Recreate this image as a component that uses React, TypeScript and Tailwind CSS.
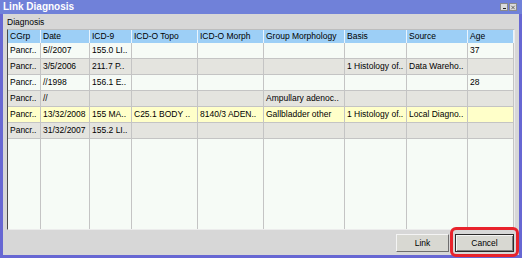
import { X } from "lucide-react";

const cols = "grid grid-cols-[33px_49px_42px_66px_66px_81px_62px_61px_46px]";

const headers = [
  "CGrp",
  "Date",
  "ICD-9",
  "ICD-O Topo",
  "ICD-O Morph",
  "Group Morphology",
  "Basis",
  "Source",
  "Age",
];

type Row = { cells: string[]; tone: "light" | "gray" | "sel" };

const rows: Row[] = [
  { cells: ["Pancr..", "5//2007", "155.0 LI..", "", "", "", "", "", "37"], tone: "light" },
  {
    cells: ["Pancr..", "3/5/2006", "211.7 P..", "", "", "", "1 Histology of..", "Data Wareho..", ""],
    tone: "gray",
  },
  { cells: ["Pancr..", "//1998", "156.1 E..", "", "", "", "", "", "28"], tone: "light" },
  { cells: ["Pancr..", "//", "", "", "", "Ampullary adenoc..", "", "", ""], tone: "gray" },
  {
    cells: [
      "Pancr..",
      "13/32/2008",
      "155 MA..",
      "C25.1 BODY ..",
      "8140/3 ADEN..",
      "Gallbladder other",
      "1 Histology of..",
      "Local Diagno..",
      "",
    ],
    tone: "sel",
  },
  { cells: ["Pancr..", "31/32/2007", "155.2 LI..", "", "", "", "", "", ""], tone: "gray" },
];

const toneBg = {
  light: "bg-[#f6fbf6]",
  gray: "bg-[#e4e4df]",
  sel: "bg-[#ffffc9]",
};

export default function App() {
  return (
    <div
      className="relative flex h-[258px] w-[522px] flex-col bg-[#6767d3] text-[8.5px] text-black"
      style={{ fontFamily: '"Liberation Sans", Arial, sans-serif' }}
    >
      {/* title bar */}
      <div className="flex h-[14px] items-center justify-between bg-[#7081d9] pl-[3px] pr-[5px]">
        <span className="text-[10px] font-bold leading-none text-white">Link Diagnosis</span>
        <div className="flex gap-[1px]">
          <div className="flex h-[8px] w-[8px] items-end justify-center border border-[#8a8a8a] bg-[#dcdcdc] pb-[1px]">
            <div className="h-[1px] w-[3px] bg-[#222]" />
          </div>
          <div className="flex h-[8px] w-[8px] items-center justify-center border border-[#8a8a8a] bg-[#dcdcdc]">
            <X size={7} strokeWidth={2.5} className="text-[#222]" />
          </div>
        </div>
      </div>

      {/* body */}
      <div className="mx-[3px] mb-[3px] flex flex-1 flex-col bg-[#d7d7d7] px-[4px]">
        <div className="flex h-[15px] items-center pt-[2px] leading-none">Diagnosis</div>

        <div className="flex h-[201px] w-[508px] flex-col border-b border-l border-r border-t border-b-[#ececec] border-l-[#4a4a4a] border-r-[#ececec] border-t-[#bdbdbd] bg-[#f6fbf6]">
          <div className={`${cols} h-[13px] bg-[#9dcff6]`}>
            {headers.map((h) => (
              <div
                key={h}
                className="flex items-center truncate border-r border-r-[#e9f4fd] pl-[2px] leading-none"
              >
                {h}
              </div>
            ))}
          </div>
          {rows.map((r, i) => (
            <div key={i} className={`${cols} h-[16px] ${toneBg[r.tone]}`}>
              {r.cells.map((c, j) => (
                <div
                  key={j}
                  className="flex items-center overflow-hidden whitespace-nowrap border-b border-r border-[#c4c4c4] pl-[2px] leading-none"
                >
                  {c}
                </div>
              ))}
            </div>
          ))}
          <div className={`${cols} flex-1`}>
            {headers.map((h) => (
              <div key={h} className="border-r border-[#c4c4c4]" />
            ))}
          </div>
        </div>

        <div className="flex flex-1 items-start justify-end gap-[6px] pr-[1px] pt-[4px]">
          <button className="flex h-[18px] w-[53px] items-center justify-center border border-[#f4f4f4] border-b-[#6e6e6e] border-r-[#6e6e6e] bg-[#d8d8d2] leading-none">
            Link
          </button>
          <button className="flex h-[18px] w-[59px] items-center justify-center border border-[#2a2a2a] bg-[#d8d8d2] leading-none shadow-[inset_1px_1px_0_#f4f4f4,inset_-1px_-1px_0_#808080]">
            Cancel
          </button>
        </div>
      </div>

      {/* annotation highlight */}
      <div className="absolute left-[450px] top-[227px] h-[30px] w-[69px] rounded-[6px] border-[3px] border-[#e8232c]" />
    </div>
  );
}
